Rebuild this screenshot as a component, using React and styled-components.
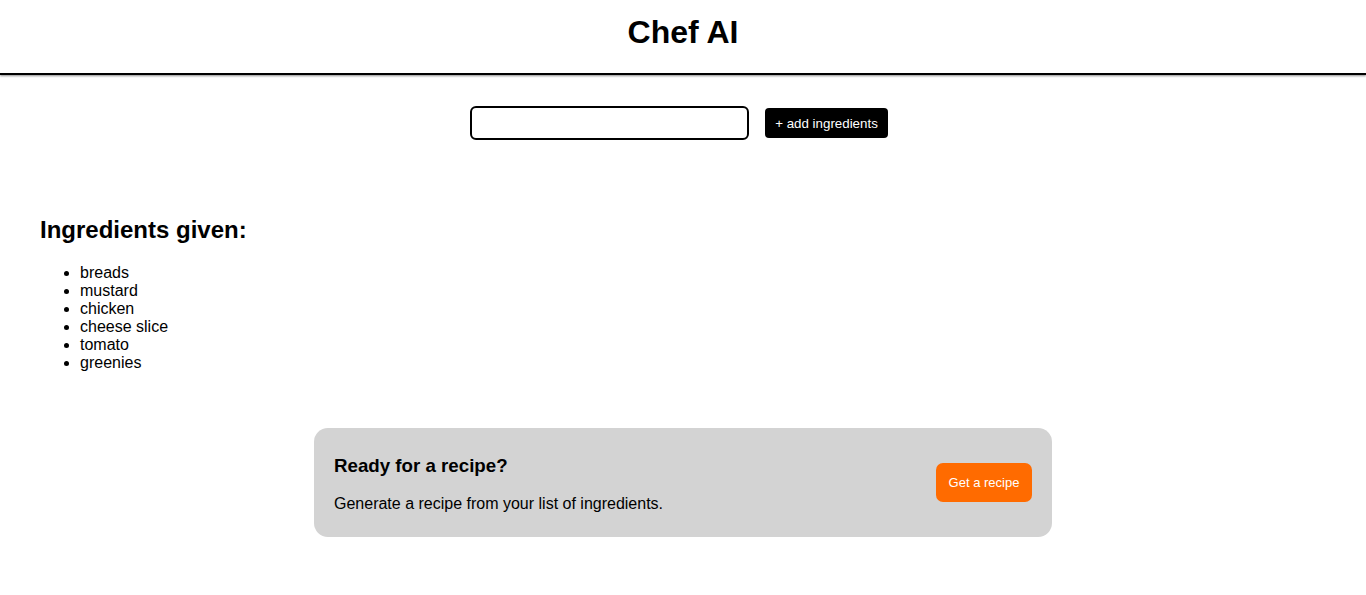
import React, { useState } from 'react'
import styled, { createGlobalStyle } from 'styled-components'

const GlobalStyle = createGlobalStyle`
    body {
        margin: 0;
        font-family: "Liberation Sans", Arial, sans-serif;
        color: #000;
        background: #fff;
    }
`

const Header = styled.header`
    display: flex;
    justify-content: center;
    padding: 14px 0 22px;
    border-bottom: 2px solid #000;
    box-shadow: 0 1px 2px rgba(0, 0, 0, 0.45);
`

const Title = styled.h1`
    margin: 0;
    font-size: 32px;
    font-weight: 700;
    line-height: 37px;
`

const Main = styled.main`
    padding: 31px 40px 0;
`

const Form = styled.form`
    display: flex;
    justify-content: center;
    align-items: center;
    gap: 16px;
    margin-right: 8px;
`

const Input = styled.input`
    box-sizing: border-box;
    width: 279px;
    height: 34px;
    border: 2px solid #000;
    border-radius: 6px;
    padding: 0 8px;
    font: inherit;
    font-size: 14px;
    outline: none;
`

const Button = styled.button`
    border: none;
    cursor: pointer;
    color: #fff;
    font-family: "Liberation Sans", Arial, sans-serif;
    line-height: 16px;
    font-size: ${p => p.$accent ? '13px' : '13.33px'};
    background: ${p => p.$accent ? '#ff6b00' : '#000'};
    border-radius: ${p => p.$accent ? '7px' : '4px'};
    padding: ${p => p.$accent ? '12px 0 11px' : '8px 10px 6px'};
    min-width: ${p => p.$accent ? '96px' : '0'};
    margin-bottom: ${p => p.$accent ? '4px' : '0'};
`

const Section = styled.section`
    margin-top: 76px;
`

const Heading = styled.h2`
    margin: 0 0 20px;
    font-size: 24px;
    line-height: 27.6px;
    font-weight: 700;
`

const List = styled.ul`
    margin: 0;
    padding-left: 40px;
    font-size: 16px;
    line-height: 18px;
`

const Card = styled.div`
    box-sizing: border-box;
    width: 738px;
    margin: 56px auto 0;
    padding: 27px 20px 23px;
    background: #d3d3d3;
    border-radius: 14px;
    display: flex;
    align-items: center;
    justify-content: space-between;
`

const CardTitle = styled.h3`
    margin: 0 0 19px;
    font-size: 18.72px;
    line-height: 21.5px;
    font-weight: 700;
`

const CardText = styled.p`
    margin: 0;
    font-size: 16px;
    line-height: 18.4px;
`

const ingredients = ['breads', 'mustard', 'chicken', 'cheese slice', 'tomato', 'greenies']

export default function App() {
    const [value, setValue] = useState('')

    return (
        <>
            <GlobalStyle />
            <Header>
                <Title>Chef AI</Title>
            </Header>
            <Main>
                <Form onSubmit={e => e.preventDefault()}>
                    <Input value={value} onChange={e => setValue(e.target.value)} aria-label="ingredient" />
                    <Button type="submit">+ add ingredients</Button>
                </Form>
                <Section>
                    <Heading>Ingredients given:</Heading>
                    <List>
                        {ingredients.map(item => <li key={item}>{item}</li>)}
                    </List>
                </Section>
                <Card>
                    <div>
                        <CardTitle>Ready for a recipe?</CardTitle>
                        <CardText>Generate a recipe from your list of ingredients.</CardText>
                    </div>
                    <Button $accent>Get a recipe</Button>
                </Card>
            </Main>
        </>
    )
}
